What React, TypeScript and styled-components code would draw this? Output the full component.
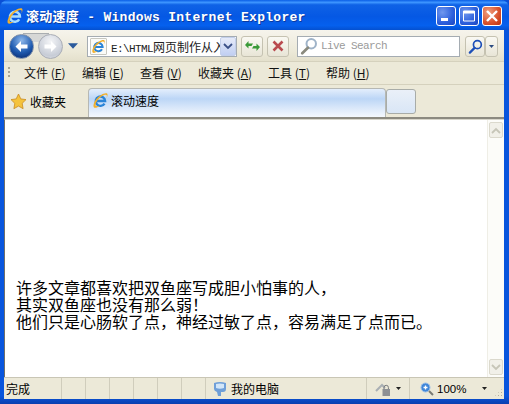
import React from "react";
import styled, { createGlobalStyle } from "styled-components";

const CJK = `"Noto Sans CJK SC", "Liberation Sans", sans-serif`;
const MONO = `"Liberation Mono", "Noto Sans CJK SC", monospace`;

const GlobalStyle = createGlobalStyle`
  html, body { margin: 0; padding: 0; background: #0a4fd6; }
  * { box-sizing: border-box; }
`;

const Win = styled.div`
  width: 509px;
  height: 404px;
  display: flex;
  flex-direction: column;
  overflow: hidden;
  border-radius: 8px 8px 0 0;
  background: linear-gradient(180deg, #0855dd 0%, #0855dd 98%, #0a3fae 100%);
  font-family: ${CJK};
  color: #000;
`;

const TitleBar = styled.div`
  height: 30px;
  flex: none;
  display: flex;
  align-items: center;
  padding: 1px 7px 0 6px;
  background: linear-gradient(180deg, #0a5ee6 0%, #3d95ff 8%, #0f62e6 16%, #0558e4 55%, #0560ee 85%, #0450d0 100%);
`;

const TitleText = styled.div`
  margin-left: 2px;
  flex: 1;
  color: #fff;
  font: bold 13px ${MONO};
  letter-spacing: 0.29px;
  white-space: pre;
  text-shadow: 1px 1px 0 #0a3aa0;
`;

const CapBtn = styled.div<{ $close?: boolean }>`
  width: 20px;
  height: 20px;
  margin-left: 3px;
  border: 1px solid #fff;
  border-radius: 3px;
  display: flex;
  align-items: center;
  justify-content: center;
  background: ${(p) =>
    p.$close
      ? "radial-gradient(circle at 30% 30%, #f0a080, #d8512c 60%, #b83010)"
      : "radial-gradient(circle at 30% 30%, #6f97ee, #2c5fdc 60%, #1c46c0)"};
`;

const Shell = styled.div`
  flex: 1;
  min-height: 0;
  margin: 0 5px 5px 4px;
  display: flex;
  flex-direction: column;
  background: #ece9d8;
`;

const NavRow = styled.div`
  height: 32px;
  flex: none;
  display: flex;
  align-items: center;
  padding: 1px 5px 0 5px;
  background: linear-gradient(180deg, #f6f4ec 0%, #ece9d8 70%, #e4e0cc 100%);
  border-bottom: 1px solid #d5d1bd;
`;

const NavPair = styled.div`
  position: relative;
  display: flex;
  gap: 4px;
  flex: none;

  &::before {
    content: "";
    position: absolute;
    left: 14px;
    right: 14px;
    top: -1px;
    height: 8px;
    background: #d6d7d6;
    border-top: 1px solid #a9adb0;
  }
`;

const RoundBtn = styled.div<{ $off?: boolean }>`
  position: relative;
  width: 25px;
  height: 25px;
  border-radius: 50%;
  flex: none;
  display: flex;
  align-items: center;
  justify-content: center;
  border: 1px solid ${(p) => (p.$off ? "#a9adb6" : "#7d8ea8")};
  background: ${(p) =>
    p.$off
      ? "radial-gradient(circle at 50% 30%, #f4f5f7, #c7ccd6 70%, #e4e6ea)"
      : "radial-gradient(circle at 50% 25%, #8fb8ea, #1f5bb0 55%, #0f3a86 80%, #4a8ad6)"};
`;

const NavMenuArrow = styled.div`
  width: 15px;
  flex: none;
  display: flex;
  justify-content: flex-end;
`;

const AddressBox = styled.div`
  width: 150px;
  height: 21px;
  margin-left: 9px;
  flex: none;
  display: flex;
  align-items: center;
  background: #fff;
  border: 1px solid #a5acb2;
  padding-left: 2px;
`;

const AddressPage = styled.div`
  position: relative;
  width: 17px;
  height: 17px;
  flex: none;
  display: flex;
  align-items: center;
  justify-content: center;
  background: #fbfbf8;
  border: 1px solid #c8c8c0;
  border-radius: 1px;
`;

const AddressText = styled.div`
  margin-left: 4px;
  flex: 1;
  overflow: hidden;
  white-space: nowrap;
  font: 12px ${CJK};
  color: #222;
`;

const AddressDrive = styled.span`
  font: 11px "Liberation Mono", monospace;
  letter-spacing: -0.6px;
`;

const ComboBtn = styled.div`
  width: 16px;
  height: 19px;
  flex: none;
  display: flex;
  align-items: center;
  justify-content: center;
  background: linear-gradient(180deg, #e6ebf9, #c1cff2);
  border: 1px solid #c3cfea;
  border-radius: 2px;
`;

const ToolBtn = styled.div<{ $ml: number; $w?: number }>`
  width: ${(p) => p.$w ?? 22}px;
  height: 21px;
  margin-left: ${(p) => p.$ml}px;
  flex: none;
  display: flex;
  align-items: center;
  justify-content: center;
  border: 1px solid #c5c2b1;
  border-radius: 3px;
  background: linear-gradient(180deg, #faf9f3, #e8e5d6);
`;

const SearchBox = styled.div`
  width: 163px;
  height: 21px;
  margin-left: 8px;
  flex: none;
  display: flex;
  align-items: center;
  background: #fff;
  border: 1px solid #a5acb2;
  padding-left: 2px;
`;

const SearchHint = styled.div`
  margin-left: 3px;
  font: 11px "Liberation Mono", monospace;
  letter-spacing: -0.6px;
  color: #9a9a9a;
`;

const MenuRow = styled.div`
  height: 23px;
  flex: none;
  display: flex;
  align-items: center;
  padding-left: 4px;
  border-bottom: 1px solid #d5d1bd;
  background: #ece9d8;
`;

const Grip = styled.div`
  width: 2px;
  height: 12px;
  margin-right: 14px;
  background: repeating-linear-gradient(180deg, #a8a594 0 2px, transparent 2px 4px);
`;

const MenuItem = styled.div<{ $w: number }>`
  width: ${(p) => p.$w}px;
  font-size: 12px;
  white-space: pre;
  line-height: 14px;
  color: #111;

  u {
    text-underline-offset: 1px;
  }
`;

const TabRow = styled.div`
  height: 34px;
  flex: none;
  display: flex;
  align-items: flex-end;
  padding-left: 6px;
  background: #ece9d8;
  border-bottom: 2px solid #8c8a80;
`;

const FavBtn = styled.div`
  width: 78px;
  height: 28px;
  margin-bottom: 2px;
  flex: none;
  display: flex;
  align-items: center;
  gap: 3px;
  font-size: 12px;
`;

const Tab = styled.div`
  width: 298px;
  height: 29px;
  flex: none;
  display: flex;
  align-items: center;
  padding: 0 0 5px 3px;
  gap: 2px;
  font-size: 12px;
  border: 1px solid #b6b8b4;
  border-bottom: none;
  border-radius: 4px 4px 0 0;
  background: linear-gradient(180deg, #e4eefc 0%, #bcd6f6 35%, #dce9fa 70%, #f4f8fd 100%);
`;

const NewTab = styled.div`
  width: 30px;
  height: 25px;
  margin-bottom: 3px;
  flex: none;
  border: 1px solid #a8aca8;
  border-radius: 3px;
  background: linear-gradient(180deg, #eaf0f8, #d9e6f6);
`;

const ContentArea = styled.div`
  flex: 1;
  min-height: 0;
  display: flex;
  background: #fff;
  border-left: 1px solid #6f6f6a;
  border-top: 1px solid #d8d6cb;
`;

const Page = styled.div`
  flex: 1;
  padding: 159px 0 0 11px;
  font-size: 16px;
  line-height: 17px;
  color: #000;
`;

const ScrollTrack = styled.div`
  width: 17px;
  flex: none;
  padding: 2px 1px;
  display: flex;
  flex-direction: column;
  justify-content: space-between;
  background: #fcfcf9;
  border-left: 1px solid #efeee6;
`;

const ScrollBtn = styled.div`
  height: 16px;
  display: flex;
  align-items: center;
  justify-content: center;
  background: #f1f0e9;
  border: 1px solid #dbd9cd;
  border-radius: 2px;
`;

const StatusBar = styled.div`
  position: relative;
  height: 22px;
  flex: none;
  display: flex;
  align-items: center;
  font-size: 12px;
  background: #ece9d8;
  border-top: 1px solid #c9c6b5;
`;

const StatusCell = styled.div<{ $w: number; $pl?: number; $line?: boolean }>`
  width: ${(p) => p.$w}px;
  height: 100%;
  flex: none;
  display: flex;
  align-items: center;
  padding-left: ${(p) => p.$pl ?? 0}px;
  gap: 4px;
  white-space: nowrap;
  border-right: ${(p) => (p.$line ? "1px solid #d0cdbc" : "none")};
`;

const ZoomLabel = styled.span`
  margin-left: -1px;
  font-family: "Liberation Sans", sans-serif;
  font-size: 11.5px;
`;

const ZoomArrow = styled.span`
  margin-left: 12px;
  display: flex;
`;

const ResizeGrip = styled.div`
  position: absolute;
  right: 1px;
  bottom: 2px;
  width: 9px;
  height: 9px;
  background: radial-gradient(circle, #b0ad9c 1px, transparent 1px) 0 0 / 3px 3px;
  clip-path: polygon(100% 0, 100% 100%, 0 100%);
`;

const IeIcon = ({ size, light }: { size: number; light?: boolean }) => (
  <svg width={size} height={size} viewBox="0 0 18 18">
    <path
      d="M13.200 12.300A5 5 0 1 1 13.900 9.500H5"
      fill="none"
      stroke={light ? "#a8dcff" : "#2a84d8"}
      strokeWidth="2.500"
    />
    <path
      d="M16 1.500C13.500.2 7.500 3.500 3.800 8.500 1.500 12 .8 15.800 2.500 16.600 4 17.200 6.500 15.800 8 14.500 6 15.200 4.200 15.300 3.800 14.200 3.200 12.500 6 7.500 10 4.800 13 2.900 15.500 2.400 15.800 4c.1.800-.2 1.800-.6 2.600 1-1.300 1.900-3.900.800-5.100z"
      fill="#f2b02c"
    />
  </svg>
);

const Triangle = ({ color = "#1f3f7a", w = 7, h = 4 }: { color?: string; w?: number; h?: number }) => (
  <svg width={w} height={h} viewBox="0 0 7 4">
    <path d="M0 0h7L3.500 4z" fill={color} />
  </svg>
);

const Chevron = ({ color, up }: { color: string; up?: boolean }) => (
  <svg width="10" height="7" viewBox="0 0 10 7">
    <path d={up ? "M1 6l4-4 4 4" : "M1 1l4 4 4-4"} fill="none" stroke={color} strokeWidth="1.800" />
  </svg>
);

const Arrow = ({ left, color }: { left?: boolean; color: string }) => (
  <svg width="15" height="13" viewBox="0 0 15 13" style={{ transform: left ? "none" : "scaleX(-1)" }}>
    <path d="M7 1L1.500 6.500 7 12V8.500h6.500v-4H7z" fill={color} />
  </svg>
);

const Magnifier = ({ glass, handle, size = 16 }: { glass: string; handle: string; size?: number }) => (
  <svg width={size} height={size} viewBox="0 0 16 16">
    <circle cx="10" cy="6" r="4.200" fill="none" stroke={glass} strokeWidth="1.800" />
    <path d="M7 9.500L2 14.500" stroke={handle} strokeWidth="2.400" strokeLinecap="round" />
  </svg>
);

export default function App() {
  return (
    <Win>
      <GlobalStyle />
      <TitleBar>
        <IeIcon size={18} light />
        <TitleText>滚动速度 - Windows Internet Explorer</TitleText>
        <CapBtn>
          <svg width="14" height="14" viewBox="0 0 14 14"><rect x="2" y="9" width="7" height="3" fill="#fff" /></svg>
        </CapBtn>
        <CapBtn>
          <svg width="14" height="14" viewBox="0 0 14 14"><path d="M1.500 2h11v10h-11z" fill="none" stroke="#fff" /><rect x="1.500" y="2" width="11" height="2.500" fill="#fff" /></svg>
        </CapBtn>
        <CapBtn $close>
          <svg width="14" height="14" viewBox="0 0 14 14"><path d="M2 2l10 10M12 2L2 12" stroke="#fff" strokeWidth="2.400" /></svg>
        </CapBtn>
      </TitleBar>
      <Shell>
        <NavRow>
          <NavPair>
            <RoundBtn><Arrow left color="#fff" /></RoundBtn>
            <RoundBtn $off><Arrow color="#fff" /></RoundBtn>
          </NavPair>
          <NavMenuArrow><Triangle w={10} h={6} color="#2a5a9c" /></NavMenuArrow>
          <AddressBox>
            <AddressPage><IeIcon size={15} /></AddressPage>
            <AddressText><AddressDrive>E:\HTML</AddressDrive>网页制作从入</AddressText>
            <ComboBtn><Chevron color="#3a4f86" /></ComboBtn>
          </AddressBox>
          <ToolBtn $ml={4}>
            <svg width="17" height="14" viewBox="0 0 17 14">
              <path d="M1 6l3.500-4v2.400H9L7.500 7H4.500v2.500zM16 8l-3.500 4V9.600H8L9.500 7h3V4.500z" fill="#3a9a38" />
            </svg>
          </ToolBtn>
          <ToolBtn $ml={4}>
            <svg width="14" height="14" viewBox="0 0 14 14"><path d="M2.500 2.500l9 9M11.500 2.500l-9 9" stroke="#b94a4e" strokeWidth="2.600" /></svg>
          </ToolBtn>
          <SearchBox>
            <Magnifier glass="#9fb3c8" handle="#8a8a7e" size={18} />
            <SearchHint>Live Search</SearchHint>
          </SearchBox>
          <ToolBtn $ml={5} $w={20}><Magnifier glass="#1d4fb8" handle="#1d4fb8" size={15} /></ToolBtn>
          <ToolBtn $ml={0} $w={13}><Triangle w={5} h={3} color="#2a4a80" /></ToolBtn>
        </NavRow>
        <MenuRow>
          <Grip />
          <MenuItem $w={58}>文件 (<u>F</u>)</MenuItem>
          <MenuItem $w={58}>编辑 (<u>E</u>)</MenuItem>
          <MenuItem $w={58}>查看 (<u>V</u>)</MenuItem>
          <MenuItem $w={70}>收藏夹 (<u>A</u>)</MenuItem>
          <MenuItem $w={58}>工具 (<u>T</u>)</MenuItem>
          <MenuItem $w={58}>帮助 (<u>H</u>)</MenuItem>
        </MenuRow>
        <TabRow>
          <FavBtn>
            <svg width="17" height="17" viewBox="0 0 17 17">
              <path d="M8.500 1l2.300 4.900 5.200.7-3.800 3.700.9 5.400-4.600-2.600-4.600 2.600.9-5.400L1 6.600l5.200-.7z" fill="#f5c33b" stroke="#c98a1e" strokeWidth=".8" />
            </svg>
            收藏夹
          </FavBtn>
          <Tab>
            <IeIcon size={17} />
            滚动速度
          </Tab>
          <NewTab />
        </TabRow>
        <ContentArea>
          <Page>
            许多文章都喜欢把双鱼座写成胆小怕事的人，<br />
            其实双鱼座也没有那么弱！<br />
            他们只是心肠软了点，神经过敏了点，容易满足了点而已。
          </Page>
          <ScrollTrack>
            <ScrollBtn><Chevron up color="#c6c5b8" /></ScrollBtn>
            <ScrollBtn><Chevron color="#c6c5b8" /></ScrollBtn>
          </ScrollTrack>
        </ContentArea>
        <StatusBar>
          <StatusCell $w={58} $pl={2} $line>完成</StatusCell>
          <StatusCell $w={24} $line />
          <StatusCell $w={24} $line />
          <StatusCell $w={24} $line />
          <StatusCell $w={24} $line />
          <StatusCell $w={24} $line />
          <StatusCell $w={24} $line />
          <StatusCell $w={161} $pl={7} $line>
            <svg width="14" height="16" viewBox="0 0 14 16">
              <path d="M1 2q6-2 12 0v6q0 3-3 3H8v4H5l-1-4q-3-1-3-3z" fill="#6f9fd8" />
              <path d="M3 3q4-1 8 0v4q-4 1.500-8 0z" fill="#d2e6f8" />
            </svg>
            我的电脑
          </StatusCell>
          <StatusCell $w={43} $pl={8} $line>
            <svg width="17" height="16" viewBox="0 0 17 16">
              <path d="M1 10l6-6 3 3" stroke="#aab0b4" strokeWidth="2" fill="none" />
              <path d="M9 8V6.500a2.200 2.200 0 0 1 4.400 0V8" stroke="#77797c" fill="none" />
              <rect x="7.500" y="8" width="7.500" height="7" fill="#8d9094" />
            </svg>
            <Triangle color="#222" w={5} h={3} />
          </StatusCell>
          <StatusCell $w={89} $pl={10}>
            <svg width="14" height="14" viewBox="0 0 14 14">
              <circle cx="5.500" cy="5.500" r="4.500" fill="#3f86d8" stroke="#9cc0e8" />
              <path d="M3.500 5.500h4M5.500 3.500v4" stroke="#fff" strokeWidth="1.300" />
              <path d="M9 9l4 4" stroke="#7a7a72" strokeWidth="2" />
            </svg>
            <ZoomLabel>100%</ZoomLabel>
            <ZoomArrow><Triangle color="#222" w={5} h={3} /></ZoomArrow>
          </StatusCell>
          <ResizeGrip />
        </StatusBar>
      </Shell>
    </Win>
  );
}
